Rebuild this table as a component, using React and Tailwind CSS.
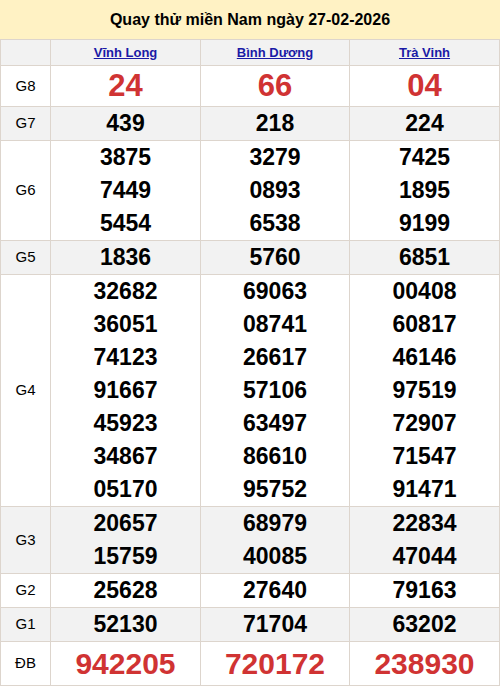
const provinces = ['Vĩnh Long', 'Bình Dương', 'Trà Vinh'];

const rows = [
  { label: 'G8', big: 'h-[40px] text-[31px]', vals: [['24'], ['66'], ['04']] },
  { label: 'G7', gray: true, vals: [['439'], ['218'], ['224']] },
  {
    label: 'G6',
    vals: [
      ['3875', '7449', '5454'],
      ['3279', '0893', '6538'],
      ['7425', '1895', '9199'],
    ],
  },
  { label: 'G5', gray: true, vals: [['1836'], ['5760'], ['6851']] },
  {
    label: 'G4',
    vals: [
      ['32682', '36051', '74123', '91667', '45923', '34867', '05170'],
      ['69063', '08741', '26617', '57106', '63497', '86610', '95752'],
      ['00408', '60817', '46146', '97519', '72907', '71547', '91471'],
    ],
  },
  {
    label: 'G3',
    gray: true,
    vals: [
      ['20657', '15759'],
      ['68979', '40085'],
      ['22834', '47044'],
    ],
  },
  { label: 'G2', vals: [['25628'], ['27640'], ['79163']] },
  { label: 'G1', gray: true, vals: [['52130'], ['71704'], ['63202']] },
  { label: 'ĐB', big: 'h-[43px] text-[30px]', vals: [['942205'], ['720172'], ['238930']] },
];

const cell = 'border-r border-b border-[#ddd5cd]';

export default function App() {
  return (
    <div className="w-[500px] bg-white font-['Liberation_Sans',Arial,sans-serif] text-black">
      <div className="h-[39px] bg-[#fff2c4] flex items-center justify-center text-[16px] font-bold">
        Quay thử miền Nam ngày 27-02-2026
      </div>
      <div className="border-t border-l border-[#ddd5cd]">
        <div className="grid grid-cols-[50px_150px_149px_150px] bg-[#f2f2f2]">
          <div className={`${cell} h-[26px]`}></div>
          {provinces.map((p) => (
            <div key={p} className={`${cell} h-[26px] flex items-center justify-center text-[13px] font-bold`}>
              <a href="#" className="text-[#1a1aa6] underline">{p}</a>
            </div>
          ))}
        </div>
        {rows.map((r) => (
          <div
            key={r.label}
            className={`grid grid-cols-[50px_150px_149px_150px] ${r.gray ? 'bg-[#f2f2f2]' : 'bg-white'}`}
          >
            <div className={`${cell} flex items-center justify-center text-[15px] font-normal`}>{r.label}</div>
            {r.vals.map((list, i) => (
              <div key={i} className={`${cell} text-center font-bold`}>
                {list.map((n) =>
                  r.big ? (
                    <div key={n} className={`${r.big} flex items-center justify-center text-[#d03333]`}>
                      {n}
                    </div>
                  ) : (
                    <div key={n} className="h-[33px] leading-[33px] text-[23px]">
                      {n}
                    </div>
                  )
                )}
              </div>
            ))}
          </div>
        ))}
      </div>
    </div>
  );
}
